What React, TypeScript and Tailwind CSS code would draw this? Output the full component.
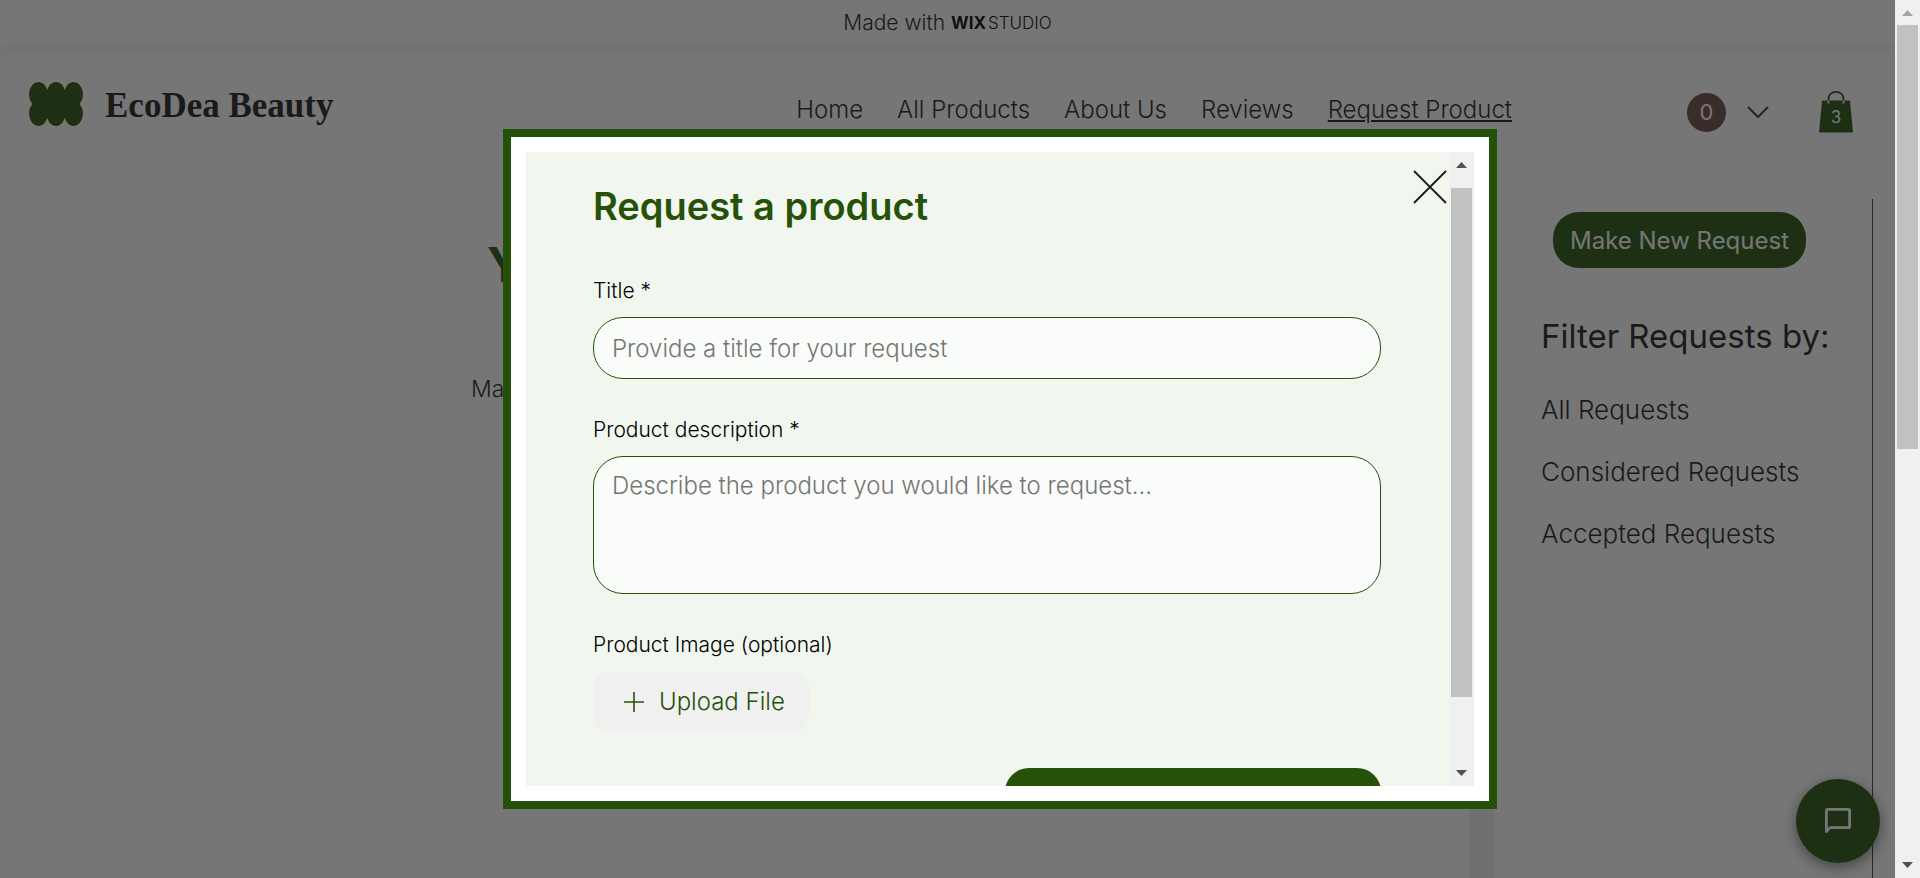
import { useState } from 'react';

interface NavLink {
  label: string;
  active?: boolean;
}

const navLinks: NavLink[] = [
  { label: 'Home' },
  { label: 'All Products' },
  { label: 'About Us' },
  { label: 'Reviews' },
  { label: 'Request Product', active: true },
];

const filters = ['All Requests', 'Considered Requests', 'Accepted Requests'];

const Logo = () => (
  <svg width="54" height="44" viewBox="0 0 54 44" fill="#255208" aria-hidden="true">
    <ellipse cx="9.5" cy="12.5" rx="9.5" ry="12.5" />
    <ellipse cx="27" cy="12.5" rx="9.5" ry="12.5" />
    <ellipse cx="44.5" cy="12.5" rx="9.5" ry="12.5" />
    <ellipse cx="9.5" cy="31.5" rx="9.5" ry="12.5" />
    <ellipse cx="27" cy="31.5" rx="9.5" ry="12.5" />
    <ellipse cx="44.5" cy="31.5" rx="9.5" ry="12.5" />
    <rect x="4" y="12" width="46" height="20" />
  </svg>
);

const Arrow = ({ down = false, color = '#505050' }: { down?: boolean; color?: string }) => (
  <svg width="11" height="6" viewBox="0 0 11 6" fill={color} aria-hidden="true">
    <path d={down ? 'M0 0H11L5.5 6Z' : 'M0 6H11L5.5 0Z'} />
  </svg>
);

const Banner = () => (
  <div className="flex h-[45px] items-center justify-center text-[21px] leading-7 font-light text-[#1a1a1a] shadow-[0_4px_12px_rgba(0,0,0,0.08)]">
    <span>Made with</span>
    <span className="ml-1.5 text-[17px] font-bold text-black">WIX</span>
    <span className="ml-0.5 text-[17px] text-black">STUDIO</span>
  </div>
);

const Header = () => (
  <header className="flex items-center pt-[30px] pr-[42px] pl-[29px]">
    <a href="#" className="flex items-center">
      <Logo />
      <span className="ml-[22px] pt-1 font-['Liberation_Serif',serif] text-[35px] leading-12 font-bold text-[#1a1a1a]">
        EcoDea Beauty
      </span>
    </a>
    <nav className="ml-auto flex gap-[34px] pt-3 text-[24px] leading-8 font-light text-[#1a1a1a]">
      {navLinks.map((link) => (
        <a
          key={link.label}
          href="#"
          className={link.active ? 'underline decoration-2 underline-offset-2' : ''}
        >
          {link.label}
        </a>
      ))}
    </nav>
    <button className="ml-[175px] flex items-center pt-4" aria-label="Account">
      <span className="flex size-[39px] items-center justify-center rounded-full bg-[#6a4740] text-[22px] text-white">
        0
      </span>
      <svg className="ml-[21px]" width="22" height="12" viewBox="0 0 22 12" fill="none" stroke="#255208" strokeWidth="2.2" aria-hidden="true">
        <path d="M1 1L11 11L21 1" />
      </svg>
    </button>
    <button className="relative ml-[50px] pt-4" aria-label="Cart with 3 items">
      <svg width="34" height="42" viewBox="0 0 34 42" aria-hidden="true">
        <path d="M3 9.5H31L34 41.5H0Z" fill="#255208" />
        <path d="M9.5 12V8C9.5 -1.5 24.5 -1.5 24.5 8V12" fill="none" stroke="#255208" strokeWidth="1.8" />
        <path d="M9.5 9.5V12.5M24.5 9.5V12.5" stroke="#fff" strokeWidth="1.8" />
      </svg>
      <span className="absolute inset-x-0 top-[30px] text-center text-[17px] leading-6 text-white">3</span>
    </button>
  </header>
);

const Sidebar = () => (
  <aside className="flex w-[379px] flex-col border-r border-[#255208] pt-[13px] pl-[47px] text-[#1a1a1a]">
    <button className="ml-3 h-14 w-[253px] rounded-[26px] bg-[#255208] pt-0.5 text-[24px] whitespace-nowrap text-white">
      Make New Request
    </button>
    <h2 className="mt-12 text-[33px] leading-10 whitespace-nowrap">Filter Requests by:</h2>
    <ul className="mt-[38px] flex flex-col gap-[30px] text-[26px] leading-8 font-light">
      {filters.map((filter) => (
        <li key={filter}>
          <a href="#" className="whitespace-nowrap">{filter}</a>
        </li>
      ))}
    </ul>
  </aside>
);

const RequestForm = () => {
  const [title, setTitle] = useState('');
  const [description, setDescription] = useState('');

  return (
    <form className="relative flex min-w-0 flex-1 flex-col bg-[#f1f6ef] pt-[30px] pr-[68px] pl-[67px]" onSubmit={(e) => e.preventDefault()}>
      <h1 className="text-[38px] leading-12 font-semibold text-[#255208]">Request a product</h1>
      <button type="button" className="absolute top-[18px] right-0.5" aria-label="Close">
        <svg width="34" height="34" viewBox="0 0 34 34" stroke="#1a1a1a" strokeWidth="1.8" aria-hidden="true">
          <path d="M1 1L33 33M33 1L1 33" />
        </svg>
      </button>

      <label htmlFor="title" className="mt-[49px] text-[21px] leading-6 font-light text-black">Title *</label>
      <input
        id="title"
        value={title}
        onChange={(e) => setTitle(e.target.value)}
        placeholder="Provide a title for your request"
        className="mt-[14px] h-[62px] shrink-0 rounded-[30px] border border-[#255208] bg-[#fafcf9] px-[18px] text-[24px] font-light placeholder:text-[#757575]"
      />

      <label htmlFor="description" className="mt-[39px] text-[21px] leading-6 font-light text-black">Product description *</label>
      <textarea
        id="description"
        value={description}
        onChange={(e) => setDescription(e.target.value)}
        placeholder="Describe the product you would like to request..."
        className="mt-[14px] h-[138px] shrink-0 resize-none rounded-[30px] border border-[#255208] bg-[#fafcf9] px-[18px] py-[13px] text-[24px] leading-8 font-light placeholder:text-[#757575]"
      />

      <label htmlFor="upload" className="mt-[39px] text-[21px] leading-6 font-light text-black">Product Image (optional)</label>
      <button id="upload" type="button" className="mt-[15px] flex h-[60px] w-[216px] shrink-0 items-center rounded-2xl bg-[#f0f0f0] pl-[31px] text-[24px] font-light text-[#255208]">
        <svg width="20" height="20" viewBox="0 0 20 20" stroke="#255208" strokeWidth="1.6" aria-hidden="true">
          <path d="M10 0V20M0 10H20" />
        </svg>
        <span className="ml-[15px] whitespace-nowrap">Upload File</span>
      </button>

      <button type="submit" aria-label="Submit" className="mt-9 h-[60px] w-[376px] shrink-0 self-end rounded-[24px] bg-[#255208]" />
    </form>
  );
};

const RequestModal = () => (
  <div className="absolute inset-0 flex items-center justify-center bg-[#1a1a1a]/60 pt-[60px] pl-[105px]">
    <div role="dialog" aria-label="Request a product" className="h-[680px] w-[994px] border-8 border-[#255208] bg-white p-[15px]">
      <div className="flex h-full overflow-hidden">
        <RequestForm />
        <div className="flex w-[25px] flex-col items-center bg-[#f0f0f0] py-2.5">
          <Arrow />
          <div className="mt-5 h-[509px] w-[21px] bg-[#c1c1c1]" />
          <div className="mt-auto">
            <Arrow down />
          </div>
        </div>
      </div>
    </div>
  </div>
);

const App = () => (
  <div className="flex h-screen overflow-hidden bg-white font-['Inter',sans-serif]">
    <div className="relative flex min-w-0 flex-1 flex-col overflow-hidden">
      <Banner />
      <Header />
      <div className="mt-[66px] flex flex-1">
        <main className="flex-1 pt-[34px] pl-[471px]">
          <h1 className="pl-4 text-[48px] leading-[64px] font-bold text-[#255208]">Y</h1>
          <p className="mt-[76px] text-[23px] leading-8 font-light text-[#1a1a1a]">Ma</p>
        </main>
        <div className="w-[25px] bg-[#f0f0f0]" />
        <Sidebar />
        <div className="w-[22px]" />
      </div>
      <button
        aria-label="Open chat"
        className="absolute right-[15px] bottom-[15px] flex size-[84px] items-center justify-center rounded-full bg-[#255208] shadow-[0_4px_14px_rgba(0,0,0,0.5)]"
      >
        <svg width="26" height="26" viewBox="0 0 26 26" fill="none" stroke="#fff" strokeWidth="2.8" strokeLinejoin="round" aria-hidden="true">
          <path d="M1.4 23.5V2.6Q1.4 1.4 2.6 1.4H23.4Q24.6 1.4 24.6 2.6V18.4Q24.6 19.6 23.4 19.6H5Z" />
        </svg>
      </button>
      <RequestModal />
    </div>
    <div className="flex w-[25px] flex-col items-center bg-[#f0f0f0] py-2.5">
      <Arrow color="#a3a3a3" />
      <div className="mt-[9px] h-[424px] w-[21px] bg-[#c1c1c1]" />
      <div className="mt-auto">
        <Arrow down />
      </div>
    </div>
  </div>
);

export default App;
